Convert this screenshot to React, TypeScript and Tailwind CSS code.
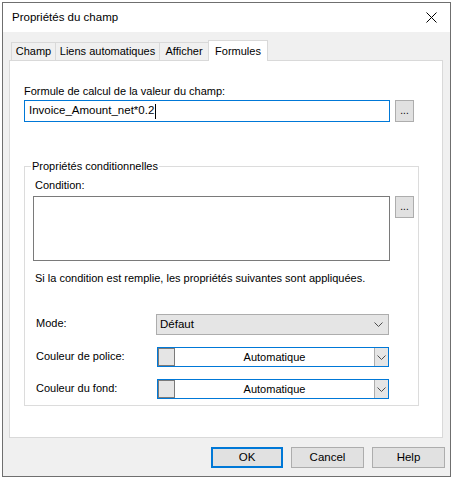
import React from "react";

const ui = { fontFamily: '"Liberation Sans", Arial, sans-serif' };

function Chevron() {
  return (
    <svg width="9" height="5" viewBox="0 0 9 5">
      <path d="M0.5 0.5 L4.5 4.5 L8.5 0.5" fill="none" stroke="#4d4d4d" strokeWidth="1" />
    </svg>
  );
}

function DotsButton() {
  return (
    <button className="w-[19px] h-[22px] bg-[#e1e1e1] border border-[#adadad] flex items-end justify-center pb-[5px] text-[10px] leading-none text-black">
      ...
    </button>
  );
}

function ColorCombo({ value }: { value: string }) {
  return (
    <div className="w-[232px] h-[20px] border border-[#0078d7] bg-white flex items-stretch">
      <div className="w-[17px] bg-[#e5e5e5] border border-[#7a7a7a]" />
      <div className="flex-1 flex items-center justify-center text-[11px] text-black">{value}</div>
      <div className="w-[14px] bg-[#e5e5e5] border-l border-[#adadad] flex items-center justify-center">
        <Chevron />
      </div>
    </div>
  );
}

const tabs = [
  { label: "Champ", w: "w-[45px]" },
  { label: "Liens automatiques", w: "w-[105px]" },
  { label: "Afficher", w: "w-[50px]" },
];

export default function App() {
  return (
    <div className="w-[454px] h-[479px] bg-white pl-[2px] pt-[2px]" style={ui}>
      <div className="w-[449px] h-[475px] border border-[#6f6f6f] flex flex-col bg-[#f0f0f0]">
        {/* title bar */}
        <div className="h-[29px] bg-white flex items-center justify-between pl-[9px] pr-[13px]">
          <span className="text-[11.5px] text-black">Propriétés du champ</span>
          <svg width="11" height="11" viewBox="0 0 11 11">
            <path d="M0.5 0.5 L10.5 10.5 M10.5 0.5 L0.5 10.5" stroke="#000" strokeWidth="1" />
          </svg>
        </div>

        <div className="flex-1 flex flex-col pl-[6px] pt-[8px]">
          {/* tab strip */}
          <div className="flex items-end h-[20px] pl-[2px] text-[11px] text-black">
            {tabs.map((t, i) => (
              <div
                key={t.label}
                className={`${t.w} h-[18px] border border-b-0 border-[#d9d9d9] bg-[#f0f0f0] flex items-center justify-center ${i > 0 ? "-ml-px" : ""}`}
              >
                {t.label}
              </div>
            ))}
            <div className="w-[60px] h-[21px] -ml-px -mb-px relative z-10 border border-b-0 border-[#d9d9d9] bg-white flex items-start justify-center pt-[2px]">
              Formules
            </div>
          </div>

          {/* panel */}
          <div className="w-[434px] h-[378px] border border-[#d9d9d9] bg-white pl-[14px] pt-[22px] text-[11px] text-black">
            <div className="h-[16px] leading-[16px]">Formule de calcul de la valeur du champ:</div>
            <div className="flex gap-[5px] mt-[1px]">
              <div className="w-[366px] h-[22px] border border-[#0078d7] flex items-center pl-[4px] text-[11.5px]">
                Invoice_Amount_net*0.2
                <span className="inline-block w-px h-[15px] bg-black ml-px" />
              </div>
              <DotsButton />
            </div>

            {/* conditional properties group */}
            <fieldset className="mt-[37px] w-[395px] h-[247px] border border-[#dcdcdc] pl-[8px] pr-0 m-0">
              <legend className="-ml-[2px] px-[1px] leading-[14px]">Propriétés conditionnelles</legend>
              <div className="mt-[5px] h-[14px] leading-[14px] pl-[2px]">Condition:</div>
              <div className="flex gap-[5px] mt-[4px] items-start">
                <div className="w-[357px] h-[65px] border border-[#7a7a7a] bg-white" />
                <DotsButton />
              </div>
              <div className="mt-[10px] pl-[2px] leading-[14px]">
                Si la condition est remplie, les propriétés suivantes sont appliquées.
              </div>

              <div className="mt-[29px] flex items-start">
                <div className="w-[123px] pl-[3px] pt-[1px]">Mode:</div>
                <div className="w-[233px] h-[21px] border border-[#adadad] bg-[#e5e5e5] flex items-center justify-between pl-[3px] pr-[5px] text-[11.5px]">
                  <span>Défaut</span>
                  <Chevron />
                </div>
              </div>
              <div className="mt-[12px] flex items-start">
                <div className="w-[124px] pl-[3px] pt-[1px]">Couleur de police:</div>
                <ColorCombo value="Automatique" />
              </div>
              <div className="mt-[12px] flex items-start">
                <div className="w-[124px] pl-[3px] pt-[1px]">Couleur du fond:</div>
                <ColorCombo value="Automatique" />
              </div>
            </fieldset>
          </div>

          {/* dialog buttons */}
          <div className="flex justify-end gap-[8px] pr-[5px] mt-[9px] text-[11.5px] text-black">
            <button className="w-[72px] h-[21px] bg-[#e1e1e1] border-2 border-[#0078d7]">OK</button>
            <button className="w-[73px] h-[21px] bg-[#e1e1e1] border border-[#adadad]">Cancel</button>
            <button className="w-[73px] h-[21px] bg-[#e1e1e1] border border-[#adadad]">Help</button>
          </div>
        </div>
      </div>
    </div>
  );
}
